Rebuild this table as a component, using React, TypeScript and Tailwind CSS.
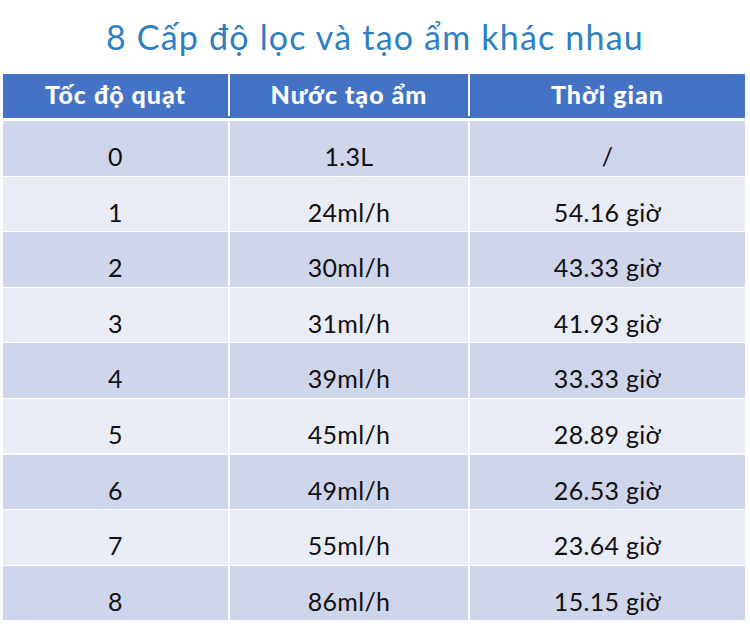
import React from "react";

const rows = [
  ["0", "1.3L", "/"],
  ["1", "24ml/h", "54.16 giờ"],
  ["2", "30ml/h", "43.33 giờ"],
  ["3", "31ml/h", "41.93 giờ"],
  ["4", "39ml/h", "33.33 giờ"],
  ["5", "45ml/h", "28.89 giờ"],
  ["6", "49ml/h", "26.53 giờ"],
  ["7", "55ml/h", "23.64 giờ"],
  ["8", "86ml/h", "15.15 giờ"],
];

export default function App() {
  return (
    <div className="w-[750px] h-[626px] bg-white overflow-hidden" style={{ fontFamily: "'Lato', 'Noto Sans', sans-serif" }}>
      <div className="h-[74px] pt-[17px] text-center text-[34px] leading-[40px] text-[#2f7fc1] tracking-[1.2px]">
        8 Cấp độ lọc và tạo ẩm khác nhau
      </div>
      <div className="ml-[3px] w-[742px]">
        <div className="grid grid-cols-[225px_238px_275px] gap-x-[2px] h-[44px] border-b-[2px] border-[#4472c4]">
          {["Tốc độ quạt", "Nước tạo ẩm", "Thời gian"].map((h) => (
            <div key={h} className="bg-[#4472c4] flex items-center justify-center text-white font-black text-[25px] tracking-[1px]">
              {h}
            </div>
          ))}
        </div>
        <div className="mt-[3px] flex flex-col gap-y-[2px]">
          {rows.map((r, i) => (
            <div key={i} className="grid grid-cols-[225px_238px_275px] gap-x-[2px] h-[53.6px]">
              {r.map((c, j) => (
                <div
                  key={j}
                  className={`${i % 2 === 0 ? "bg-[#cfd5ea]" : "bg-[#e9ebf5]"} flex items-center justify-center text-[25px] text-[#111] pt-[17px] tracking-[0.3px]`}
                >
                  {c}
                </div>
              ))}
            </div>
          ))}
        </div>
      </div>
    </div>
  );
}
